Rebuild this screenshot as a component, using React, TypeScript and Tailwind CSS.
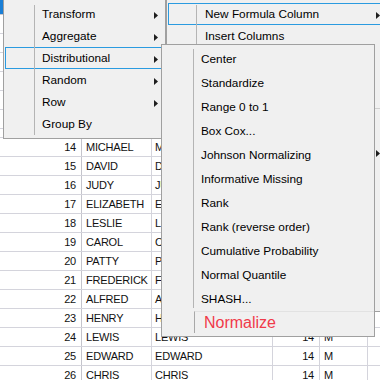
import React from 'react';

// Big Class rows visible behind the menus; age/sex under the submenu are covered, so left blank
const rows: [number, string, string, string][] = [
  [14, 'MICHAEL', '', ''],
  [15, 'DAVID', '', ''],
  [16, 'JUDY', '', ''],
  [17, 'ELIZABETH', '', ''],
  [18, 'LESLIE', '', ''],
  [19, 'CAROL', '', ''],
  [20, 'PATTY', '', ''],
  [21, 'FREDERICK', '', ''],
  [22, 'ALFRED', '', ''],
  [23, 'HENRY', '', ''],
  [24, 'LEWIS', '14', 'M'],
  [25, 'EDWARD', '14', 'M'],
  [26, 'CHRIS', '14', 'M'],
];

const distributional = [
  'Center',
  'Standardize',
  'Range 0 to 1',
  'Box Cox...',
  'Johnson Normalizing',
  'Informative Missing',
  'Rank',
  'Rank (reverse order)',
  'Cumulative Probability',
  'Normal Quantile',
  'SHASH...',
];

function Arrow() {
  return (
    <svg width="4" height="7" viewBox="0 0 4 7" className="shrink-0">
      <path d="M0 0L4 3.5L0 7Z" fill="#1e1e1e" />
    </svg>
  );
}

function MenuItem({ label, sub, active }: { label: string; sub?: boolean; active?: boolean }) {
  return (
    <div
      className={`flex h-[22px] items-center border pt-[2px] pl-[36px] pr-[5px] ${
        active ? 'border-[#2a9be0]' : 'border-transparent'
      }`}
    >
      <span className="flex-1 whitespace-nowrap">{label}</span>
      {sub && <Arrow />}
    </div>
  );
}

export default function App() {
  return (
    <div className="relative w-[380px] h-[380px] overflow-hidden bg-white font-['Liberation_Sans',Arial,sans-serif] text-black">
      {/* Data table */}
      <div className="flex flex-col text-[11px] tracking-[-0.2px] text-[#111]">
        <div className="flex h-[138px] flex-col">
          <div className="flex h-[15px] border-b border-[#c8c8d0]">
            <div className="w-[3px] bg-[#1a7fd6]" />
          </div>
          {[0, 1, 2, 3, 4, 5].map((i) => (
            <div key={i} className="h-[19px] border-b border-[#d4d4dc]" />
          ))}
          <div className="h-[9px] border-b border-[#d4d4dc]" />
        </div>
        {rows.map(([n, name, age, sex]) => (
          <div key={n} className="flex h-[19px] border-b border-[#d4d4dc] leading-[18px]">
            <div className="w-[82px] border-r border-[#c4c4cc] pr-[5px] text-right">{n}</div>
            <div className="w-[70px] overflow-hidden whitespace-nowrap border-r border-[#d4d4dc] pl-[4px]">{name}</div>
            <div className="w-[121px] overflow-hidden whitespace-nowrap border-r border-[#d4d4dc] pl-[3px]">{name}</div>
            <div className="w-[47px] border-r border-[#d4d4dc] pr-[5px] text-right">{age}</div>
            <div className="w-[48px] border-r border-[#d4d4dc] pl-[4px]">{sex}</div>
            <div className="flex-1" />
          </div>
        ))}
      </div>

      {/* Column context menu */}
      <div className="absolute left-[166px] top-[-2px] h-[314px] w-[222px] border border-[#a0a0a0] bg-[#f0f0f0] px-[1px] pt-[4px] text-[11.8px]">
        <div className="absolute left-[29px] top-[6px] h-[302px] w-px bg-[#b4b4b4]" />
        <MenuItem label="New Formula Column" sub active />
        <MenuItem label="Insert Columns" />
        <div className="h-[61px]" />
        <div className="ml-[30px] h-px bg-[#cfcfcf]" />
        <div className="h-[33px]" />
        <div className="flex h-[22px] items-center justify-end pr-[6px]">
          <Arrow />
        </div>
      </div>

      {/* New Formula Column submenu */}
      <div className="absolute left-[3px] top-[-2px] h-[141px] w-[163px] border border-[#a0a0a0] bg-[#f0f0f0] px-[1px] pt-[4px] text-[11.8px]">
        <div className="absolute left-[30px] top-[6px] h-[130px] w-px bg-[#b4b4b4]" />
        <MenuItem label="Transform" sub />
        <MenuItem label="Aggregate" sub />
        <MenuItem label="Distributional" sub active />
        <MenuItem label="Random" sub />
        <MenuItem label="Row" sub />
        <MenuItem label="Group By" />
      </div>

      {/* Distributional submenu */}
      <div className="absolute left-[161px] top-[44px] h-[293px] w-[214px] border border-[#a0a0a0] bg-[#f0f0f0] pt-[2px] text-[11.8px]">
        <div className="absolute left-[31px] top-[4px] h-[259px] w-px bg-[#b4b4b4]" />
        {distributional.map((label) => (
          <div key={label} className="flex h-[24px] items-center whitespace-nowrap pt-[1px] pl-[39px]">
            {label}
          </div>
        ))}
        <div className="flex h-[24px]">
          <div className="w-[32px]" />
          <div className="flex h-[22px] flex-1 items-center border-l border-t border-l-[#a8a8a8] border-t-[#e2e2e2] pl-[9px] text-[16px] text-[#f03a4a]">
            Normalize
          </div>
        </div>
      </div>
    </div>
  );
}
